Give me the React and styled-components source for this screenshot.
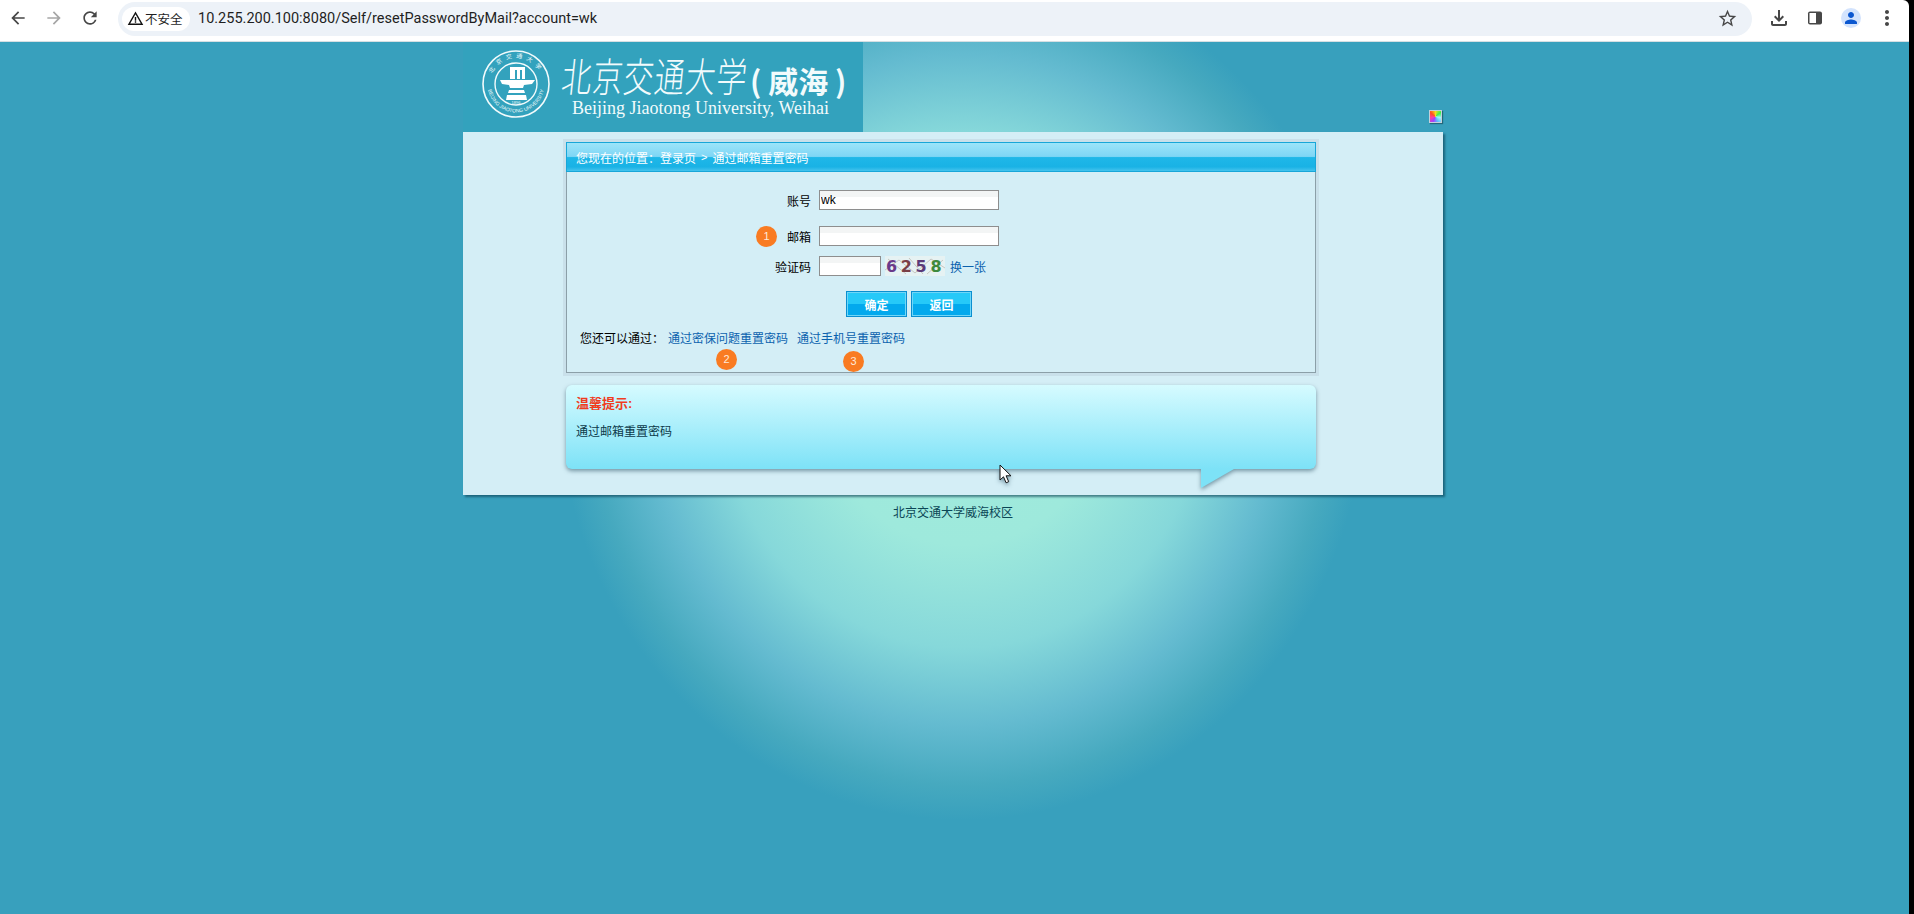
import React from "react";
import styled, { createGlobalStyle } from "styled-components";
import {
  MdArrowBack,
  MdArrowForward,
  MdRefresh,
  MdStarBorder,
  MdOutlineFileDownload,
  MdMoreVert,
  MdPerson,
  MdWarningAmber,
} from "react-icons/md";

const CJK = `"Liberation Sans", "Noto Sans CJK SC", sans-serif`;

const GlobalStyle = createGlobalStyle`
  html, body {
    margin: 0;
    padding: 0;
    height: 100%;
    overflow: hidden;
    background: #000;
    font-family: ${CJK};
    font-size: 12px;
  }
`;

const Window = styled.div`
  display: flex;
  width: 100%;
  height: 100vh;
  background: #000;
`;

const Main = styled.div`
  display: flex;
  flex-direction: column;
  width: 1909px;
  height: 100%;
  border-top-right-radius: 6px;
  overflow: hidden;
`;

/* browser chrome */
const Chrome = styled.div`
  display: flex;
  align-items: center;
  flex: none;
  height: 36px;
  padding-bottom: 5px;
  background: #fff;
  border-bottom: 1px solid #d6dfe3;
`;

const NavButton = styled.div`
  display: flex;
  align-items: center;
  justify-content: center;
  flex: none;
  width: 36px;
  height: 36px;
  color: ${(p) => p.$color || "#474747"};
  font-size: ${(p) => p.$size || 20}px;
`;

const NavGroup = styled.div`
  display: flex;
  flex: none;
  width: 118px;
`;

const Omnibox = styled.div`
  display: flex;
  align-items: center;
  flex: none;
  width: 1634px;
  height: 34px;
  margin-top: 1px;
  padding: 0 7px 0 4px;
  box-sizing: border-box;
  background: #edf2f8;
  border-radius: 17px;
`;

const SecurityChip = styled.div`
  display: flex;
  align-items: center;
  gap: 1px;
  flex: none;
  width: 68px;
  height: 24px;
  padding-left: 5px;
  box-sizing: border-box;
  background: #fff;
  border-radius: 12px;
  color: #1f1f1f;
  font-size: 12.5px;
  svg {
    font-size: 17px;
    color: #111;
  }
`;

const UrlText = styled.div`
  flex: 1;
  margin-left: 8px;
  font-family: Roboto, "Liberation Sans", sans-serif;
  font-size: 14.5px;
  color: #1f1f1f;
  white-space: nowrap;
`;

const Tools = styled.div`
  display: flex;
  align-items: center;
  flex: 1;
  padding-left: 9px;
`;

const ToolButton = styled.div`
  display: flex;
  align-items: center;
  justify-content: center;
  flex: none;
  width: 36px;
  height: 36px;
  color: #474747;
  font-size: 24px;
`;

const Avatar = styled.div`
  display: flex;
  align-items: center;
  justify-content: center;
  width: 20px;
  height: 20px;
  border-radius: 50%;
  background: #d3e3fd;
  color: #0b57d0;
  font-size: 18px;
`;

/* page */
const Page = styled.div`
  flex: 1;
  padding-right: 3px;
  background-color: #38a0bd;
  background-image: radial-gradient(
    ellipse 404px 430px at 962px 348px,
    #a0ecdc 0%,
    #9ee9dc 36%,
    #86d8da 60%,
    #64bbd0 78%,
    #46a9bf 92%,
    #38a0bd 100%
  );
`;

const Header = styled.div`
  display: flex;
  align-items: flex-end;
  justify-content: space-between;
  width: 980px;
  height: 90px;
  margin: 0 auto;
`;

const LogoBlock = styled.div`
  display: flex;
  width: 400px;
  height: 90px;
  padding: 7px 0 0 18px;
  box-sizing: border-box;
  background: #33a2bd;
  color: #f2fbfc;
`;

const Seal = styled.svg`
  flex: none;
  width: 70px;
  height: 70px;
`;

const LogoText = styled.div`
  display: flex;
  flex-direction: column;
  margin-left: 11px;
`;

const LogoTitle = styled.div`
  display: flex;
  align-items: center;
  height: 49px;
  white-space: nowrap;
`;

const Calligraphy = styled.span`
  font-family: "Noto Sans CJK JP", "Noto Sans CJK SC", sans-serif;
  font-weight: 300;
  font-size: 30px;
  letter-spacing: 1px;
  transform: scale(1, 1.35) skewX(-8deg);
`;

const Campus = styled.span`
  font-family: "Noto Sans CJK SC", sans-serif;
  font-weight: 700;
  font-size: 30px;
  margin-left: 2px;
  margin-top: 12px;
`;

const LogoSub = styled.div`
  margin: 0 0 0 10px;
  font-family: "Liberation Serif", serif;
  font-size: 18px;
  line-height: 20px;
  white-space: nowrap;
`;

const ThemeIcon = styled.div`
  width: 13px;
  height: 13px;
  margin: 0 1px 9px 0;
  border: 1px solid #c4d0da;
  box-sizing: border-box;
  background: conic-gradient(#f6e020, #3ef04a, #9ff8ff, #5cc0ff, #a040ff, #ff40a0, #ff5020, #f6e020);
  box-shadow: 1px 1px 1px rgba(0, 0, 0, 0.35);
`;

const Panel = styled.div`
  width: 980px;
  height: 363px;
  margin: 0 auto;
  padding: 10px 0 0 103px;
  box-sizing: border-box;
  background: #d4eef6;
  box-shadow: 2px 2px 2px rgba(10, 60, 80, 0.6);
`;

const FormBox = styled.div`
  display: flex;
  flex-direction: column;
  width: 750px;
  height: 231px;
  box-sizing: border-box;
  border: 1px solid #8b9fa8;
  border-top: none;
  box-shadow: 0 0 0 3px #c9e0ea;
  background: #d4eef6;
`;

const BreadBar = styled.div`
  display: flex;
  align-items: center;
  flex: none;
  height: 30px;
  margin: 0 -1px;
  padding-left: 9px;
  box-sizing: border-box;
  border: 1px solid #18a6d8;
  background: linear-gradient(#9ce4f9 0%, #7ed6f5 48%, #1fb7e8 52%, #19b2e5 85%, #45c3ed 100%);
  color: #fff;
  font-size: 12px;
  white-space: pre;
`;

const BreadSep = styled.span`
  margin: 0 5px;
  font-size: 11px;
`;

const FieldRow = styled.div`
  display: flex;
  align-items: center;
  gap: 8px;
  height: 20px;
  margin-top: ${(p) => p.$top}px;
`;

const FieldLabel = styled.label`
  display: flex;
  align-items: center;
  justify-content: flex-end;
  gap: 10px;
  width: 244px;
  color: #000;
  font-size: 12px;
`;

const TextInput = styled.input`
  width: ${(p) => p.$width}px;
  height: 20px;
  margin: 0;
  padding: 0 1px;
  box-sizing: border-box;
  border: 1px solid #8e8e8e;
  background: linear-gradient(#f3f5f5 0 6px, #fff 6px);
  font-family: "Liberation Sans", sans-serif;
  font-size: 12px;
  color: #000;
  outline: none;
`;

const Captcha = styled.svg`
  flex: none;
  width: 60px;
  height: 20px;
  margin-left: -4px;
`;

const BlueLink = styled.a`
  position: relative;
  margin-left: ${(p) => p.$left || 0}px;
  color: #0b62ae;
  font-size: 12px;
  text-decoration: none;
  cursor: pointer;
  white-space: nowrap;
`;

const Badge = styled.span`
  display: flex;
  align-items: center;
  justify-content: center;
  flex: none;
  width: 21px;
  height: 21px;
  border-radius: 50%;
  background: #f97b22;
  color: #ffe9d8;
  font-size: 11px;
`;

const LinkBadge = styled(Badge)`
  position: absolute;
  left: ${(p) => p.$left}px;
  top: ${(p) => p.$top}px;
`;

const ButtonRow = styled.div`
  display: flex;
  gap: 4px;
  margin: 15px 0 0 279px;
`;

const ActionButton = styled.button`
  width: 61px;
  height: 26px;
  padding: 0;
  border: 1px solid #0a8fd0;
  box-shadow: inset 0 0 0 1px #6fd6f8;
  background: linear-gradient(#26c9f8 0%, #26c9f8 50%, #03a9ed 50%, #03a9ed 100%);
  color: #fff;
  font-family: ${CJK};
  font-size: 12px;
  font-weight: 700;
`;

const AltRow = styled.div`
  display: flex;
  align-items: center;
  height: 20px;
  margin: 10px 0 0 13px;
  color: #000;
  font-size: 12px;
  white-space: nowrap;
`;

const AltLabel = styled.span`
  width: 88px;
`;

const AltLinks = styled.div`
  display: flex;
  gap: 9px;
`;

const TipBox = styled.div`
  position: relative;
  width: 750px;
  height: 84px;
  margin-top: 12px;
  padding: 9px 10px;
  box-sizing: border-box;
  border-radius: 6px;
  background: linear-gradient(#d6fbff, #7de2f7);
  filter: drop-shadow(0 2px 2px rgba(20, 60, 80, 0.5));
  color: #0c3a4a;

  &::after {
    content: "";
    position: absolute;
    left: 635px;
    top: 100%;
    width: 33px;
    height: 19px;
    background: #7de2f7;
    clip-path: polygon(0 0, 100% 0, 0 100%);
  }
`;

const TipTitle = styled.div`
  height: 20px;
  line-height: 20px;
  color: #f03c1e;
  font-size: 13px;
  font-weight: 700;
`;

const TipText = styled.div`
  margin-top: 8px;
  height: 20px;
  line-height: 20px;
  font-size: 12px;
`;

const MouseCursor = styled.svg`
  position: absolute;
  left: 433px;
  top: 79px;
  width: 13px;
  height: 20px;
`;

const Footer = styled.div`
  margin-top: 10px;
  line-height: 16px;
  text-align: center;
  color: #0b4656;
  font-size: 12px;
`;

const BlackEdge = styled.div`
  flex: 1;
  background: #000;
`;

function SealMark() {
  return (
    <Seal viewBox="0 0 70 70">
      <defs>
        <path id="seal-top" d="M 9 35 A 26 26 0 0 1 61 35" />
        <path id="seal-bottom" d="M 6.5 35 A 28.5 28.5 0 0 0 63.5 35" />
      </defs>
      <circle cx="35" cy="35" r="33" fill="none" stroke="#f2fbfc" strokeWidth="1.6" />
      <circle cx="35" cy="35" r="21" fill="none" stroke="#f2fbfc" strokeWidth="1.4" />
      <text fontSize="6" fill="#f2fbfc" fontFamily="Noto Sans CJK SC, sans-serif">
        <textPath href="#seal-top" startOffset="50%" textAnchor="middle" letterSpacing="4">
          北京交通大学
        </textPath>
      </text>
      <text fontSize="5" fill="#f2fbfc" fontFamily="Liberation Sans, sans-serif">
        <textPath href="#seal-bottom" startOffset="50%" textAnchor="middle">
          BEIJING JIAOTONG UNIVERSITY
        </textPath>
      </text>
      <path
        fill="#fff"
        d="M29 18h15v12h-3v-9h-2v9h-3v-9h-2v9h-5zM19 31h35l-3 4-8 1-1 3h-13l-1-3-7-1zM28 41h15l1 3H27zM26 46h19l1 5H25z"
      />
      <text x="35" y="54.5" fontSize="4" textAnchor="middle" fill="#f2fbfc" fontFamily="Liberation Sans, sans-serif">
        1896
      </text>
    </Seal>
  );
}

function CaptchaImage() {
  const digits = [
    ["6", "#6a3a8a"],
    ["2", "#7a3f46"],
    ["5", "#5b3a78"],
    ["8", "#3e8a3e"],
  ];
  return (
    <Captcha viewBox="0 0 60 20">
      <rect width="60" height="20" fill="#e6f2f3" />
      <path d="M0 14L14 4 30 17 46 3 60 12M3 3l18 15M24 2l14 16M42 18L58 4" stroke="#c7c6c0" strokeWidth="1" fill="none" />
      {digits.map(([d, c], i) => (
        <text key={i} x={1 + i * 14.8} y="16" fontFamily="DejaVu Sans, sans-serif" fontWeight="700" fontSize="16" fill={c}>
          {d}
        </text>
      ))}
    </Captcha>
  );
}

export default function App() {
  return (
    <Window>
      <GlobalStyle />
      <Main>
        <Chrome>
          <NavGroup>
            <NavButton><MdArrowBack /></NavButton>
            <NavButton $color="#a6a6a6"><MdArrowForward /></NavButton>
            <NavButton><MdRefresh /></NavButton>
          </NavGroup>
          <Omnibox>
            <SecurityChip>
              <MdWarningAmber />
              <span>不安全</span>
            </SecurityChip>
            <UrlText>10.255.200.100:8080/Self/resetPasswordByMail?account=wk</UrlText>
            <NavButton $size={21}><MdStarBorder /></NavButton>
          </Omnibox>
          <Tools>
            <ToolButton><MdOutlineFileDownload /></ToolButton>
            <ToolButton>
              <svg width="16" height="16" viewBox="0 0 16 16">
                <rect x="1" y="1.5" width="14" height="13" rx="2" fill="#474747" />
                <rect x="2.5" y="3" width="6.5" height="10" fill="#fff" />
              </svg>
            </ToolButton>
            <ToolButton><Avatar><MdPerson /></Avatar></ToolButton>
            <ToolButton><MdMoreVert /></ToolButton>
          </Tools>
        </Chrome>
        <Page>
          <Header>
            <LogoBlock>
              <SealMark />
              <LogoText>
                <LogoTitle>
                  <Calligraphy>北京交通大学</Calligraphy>
                  <Campus>( 威海 )</Campus>
                </LogoTitle>
                <LogoSub>Beijing Jiaotong University, Weihai</LogoSub>
              </LogoText>
            </LogoBlock>
            <ThemeIcon />
          </Header>
          <Panel>
            <FormBox>
              <BreadBar>
                您现在的位置：登录页<BreadSep>&gt;</BreadSep>通过邮箱重置密码
              </BreadBar>
              <FieldRow $top={18}>
                <FieldLabel>账号</FieldLabel>
                <TextInput $width={180} defaultValue="wk" />
              </FieldRow>
              <FieldRow $top={16}>
                <FieldLabel>
                  <Badge>1</Badge>
                  邮箱
                </FieldLabel>
                <TextInput $width={180} />
              </FieldRow>
              <FieldRow $top={10}>
                <FieldLabel>验证码</FieldLabel>
                <TextInput $width={62} />
                <CaptchaImage />
                <BlueLink $left={-3}>换一张</BlueLink>
              </FieldRow>
              <ButtonRow>
                <ActionButton>确定</ActionButton>
                <ActionButton>返回</ActionButton>
              </ButtonRow>
              <AltRow>
                <AltLabel>您还可以通过：</AltLabel>
                <AltLinks>
                  <BlueLink>
                    通过密保问题重置密码
                    <LinkBadge $left={48} $top={20}>2</LinkBadge>
                  </BlueLink>
                  <BlueLink>
                    通过手机号重置密码
                    <LinkBadge $left={46} $top={22}>3</LinkBadge>
                  </BlueLink>
                </AltLinks>
              </AltRow>
            </FormBox>
            <TipBox>
              <TipTitle>温馨提示:</TipTitle>
              <TipText>通过邮箱重置密码</TipText>
              <MouseCursor viewBox="0 0 13 20">
                <path d="M1 1v15l3.5-3.2 2.6 6 2.6-1.1-2.6-5.9H12z" fill="#fff" stroke="#111" strokeWidth="1" />
              </MouseCursor>
            </TipBox>
          </Panel>
          <Footer>北京交通大学威海校区</Footer>
        </Page>
      </Main>
      <BlackEdge />
    </Window>
  );
}
